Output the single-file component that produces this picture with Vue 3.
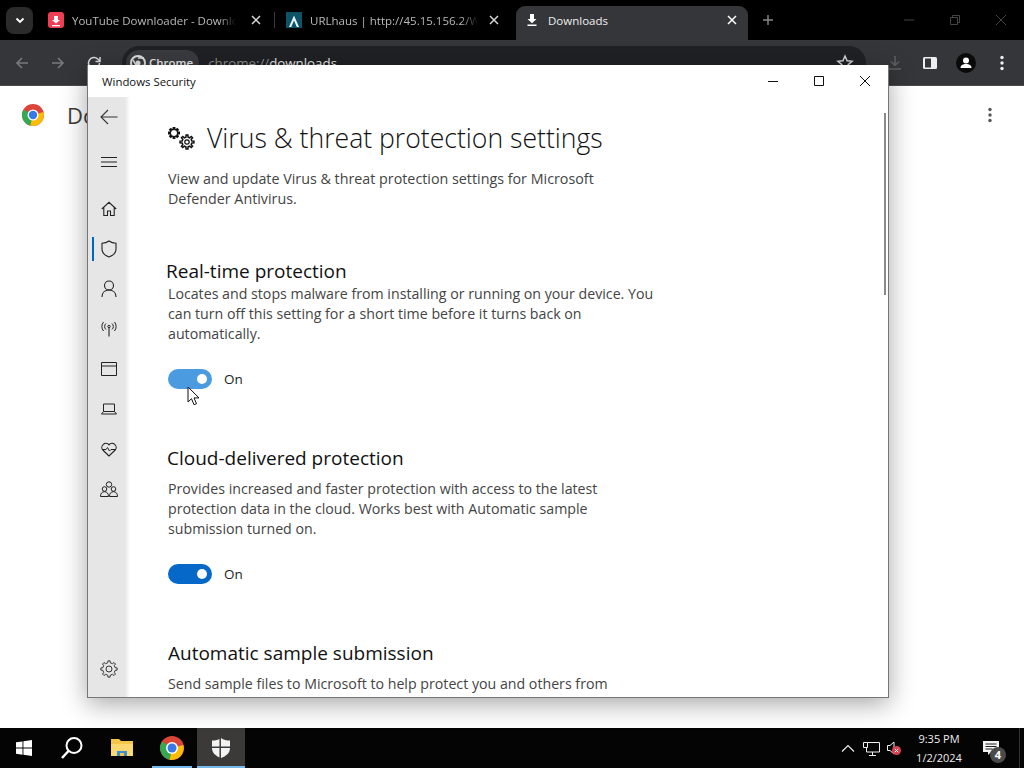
<template>
  <div class="screen">
    <!-- chrome tab strip -->
    <div class="tabstrip">
      <div class="tab-search">
        <svg width="12" height="12" viewBox="0 0 12 12"><path d="M2.500 4.500 6 8l3.500-3.500" fill="none" stroke="#fff" stroke-width="1.800" /></svg>
      </div>
      <div class="tab tab1">
        <span class="favicon fav-yt">
          <svg width="16" height="16" viewBox="0 0 16 16"><path d="M6 3h4v4h2L8 10.500 4 7h2zM4 12h8v1.200H4z" fill="#fff" /></svg>
        </span>
        <span class="tab-title">YouTube Downloader - Downlo</span>
        <svg class="tab-x" width="10" height="10" viewBox="0 0 10 10"><path d="M1 1l8 8M9 1 1 9" stroke="#d8d8d8" stroke-width="1.500" /></svg>
      </div>
      <div class="tab-sep"></div>
      <div class="tab tab2">
        <span class="favicon fav-url">
          <svg width="16" height="16" viewBox="0 0 16 16"><path d="M8 2.500 3 14h2.200L8 7.500l2.800 6.500H13z" fill="#e8f6fa" /></svg>
        </span>
        <span class="tab-title">URLhaus | http://45.15.156.2/W</span>
        <svg class="tab-x" width="10" height="10" viewBox="0 0 10 10"><path d="M1 1l8 8M9 1 1 9" stroke="#d8d8d8" stroke-width="1.500" /></svg>
      </div>
      <div class="tab tab-active">
        <svg class="dl-icon" width="16" height="16" viewBox="0 0 16 16"><path d="M6 2h4v5h2.500L8 11.200 3.500 7H6zM3.500 12.500h9V14h-9z" fill="#fff" /></svg>
        <span class="active-title">Downloads</span>
        <svg class="tab-x" width="10" height="10" viewBox="0 0 10 10"><path d="M1 1l8 8M9 1 1 9" stroke="#fff" stroke-width="1.500" /></svg>
      </div>
      <svg class="tab-plus" width="12" height="12" viewBox="0 0 12 12"><path d="M6 1v10M1 6h10" stroke="#8a8a8a" stroke-width="1.400" /></svg>
      <div class="win-ctrls">
        <svg width="12" height="12" viewBox="0 0 12 12"><path d="M1 6h10" stroke="#444" /></svg>
        <svg width="12" height="12" viewBox="0 0 12 12"><path d="M1.500 3.500h7v7h-7zM3.500 3.500v-2h7v7h-2" fill="none" stroke="#444" /></svg>
        <svg width="12" height="12" viewBox="0 0 12 12"><path d="M1 1l10 10M11 1 1 11" stroke="#444" /></svg>
      </div>
    </div>

    <!-- chrome toolbar -->
    <div class="toolbar">
      <svg width="16" height="16" viewBox="0 0 16 16"><path d="M14 8H3M8 3 3 8l5 5" fill="none" stroke="#77797c" stroke-width="1.600" /></svg>
      <svg width="16" height="16" viewBox="0 0 16 16"><path d="M2 8h11M8 3l5 5-5 5" fill="none" stroke="#77797c" stroke-width="1.600" /></svg>
      <svg width="16" height="16" viewBox="0 0 16 16"><path d="M13.500 8A5.500 5.500 0 1 1 11.800 4L14 6M14 2v4.500H9.500" fill="none" stroke="#dcdcdc" stroke-width="1.500" /></svg>
      <div class="omnibox">
        <div class="chip">
          <svg width="16" height="16" viewBox="0 0 16 16"><circle cx="8" cy="8" r="7" fill="none" stroke="#ddd" stroke-width="2" /><circle cx="8" cy="8" r="2.500" fill="#ddd" /><path d="M8 3h6M3 5l3 5M13 10l-4 4" stroke="#ddd" stroke-width="1.500" /></svg>
          <span class="chip-text">Chrome</span>
        </div>
        <span class="url"><span class="url-dim">chrome://</span>downloads</span>
        <svg class="star" width="18" height="18" viewBox="0 0 18 18"><path d="m9 2 2.100 4.700 5 .5-3.800 3.300 1.100 5L9 13l-4.400 2.500 1.100-5L1.900 7.200l5-.5z" fill="none" stroke="#d5d5d5" stroke-width="1.500" /></svg>
      </div>
      <div class="tool-right">
        <svg width="18" height="18" viewBox="0 0 18 18"><path d="M9 2v9M5 7.500l4 4 4-4M3 15h12" fill="none" stroke="#5e6064" stroke-width="1.500" /></svg>
        <svg width="16" height="16" viewBox="0 0 16 16"><rect x="1" y="2" width="14" height="12" rx="1.500" fill="#eee" /><rect x="3" y="3.500" width="6" height="9" fill="#35363a" /></svg>
        <svg width="20" height="20" viewBox="0 0 20 20"><circle cx="10" cy="10" r="10" fill="#0a0a0a" /><circle cx="10" cy="7.500" r="3" fill="#fff" /><path d="M4.500 15c0-3 2.500-4 5.500-4s5.500 1 5.500 4z" fill="#fff" /></svg>
        <svg class="tool-dots" width="4" height="16" viewBox="0 0 4 16"><circle cx="2" cy="2.500" r="1.700" fill="#eee" /><circle cx="2" cy="8" r="1.700" fill="#eee" /><circle cx="2" cy="13.500" r="1.700" fill="#eee" /></svg>
      </div>
    </div>

    <!-- downloads page behind the window -->
    <div class="page">
      <svg width="24" height="24" viewBox="0 0 24 24">
        <circle cx="12" cy="12" r="11" fill="#db4437" />
        <path d="M12 12 22.500 9A11 11 0 0 1 9 22.600z" fill="#fbbc04" />
        <path d="M12 12 9 22.600A11 11 0 0 1 2.500 6.500z" fill="#34a853" />
        <circle cx="12" cy="12" r="5.500" fill="#fff" />
        <circle cx="12" cy="12" r="4.200" fill="#3b78e7" />
      </svg>
      <span class="page-title">Downloads</span>
      <svg class="page-dots" width="4" height="16" viewBox="0 0 4 16"><circle cx="2" cy="2.500" r="1.700" fill="#555" /><circle cx="2" cy="8" r="1.700" fill="#555" /><circle cx="2" cy="13.500" r="1.700" fill="#555" /></svg>
    </div>

    <!-- taskbar -->
    <div class="taskbar">
      <div class="task-btn start">
        <svg width="16" height="16" viewBox="0 0 16 16"><path d="M0 2.300 6.500 1.400v6.200H0zM7.400 1.300 16 0v7.600H7.400zM0 8.500h6.500v6.200L0 13.800zM7.400 8.500H16V16l-8.600-1.200z" fill="#fff" /></svg>
      </div>
      <div class="task-btn">
        <svg width="24" height="24" viewBox="0 0 24 24"><circle cx="14" cy="9.500" r="7.500" fill="none" stroke="#fff" stroke-width="2" /><path d="M8.500 15 2 22" stroke="#fff" stroke-width="2.500" /></svg>
      </div>
      <div class="task-btn">
        <svg width="22" height="20" viewBox="0 0 22 20"><path d="M0 1h8l2 2h12v15H0z" fill="#f6c648" /><path d="M0 6h22v12H0z" fill="#fbd970" /><path d="M6 13h10v5H6z" fill="#3c8fd6" /><path d="M9 15h4v3H9z" fill="#f6c648" /></svg>
      </div>
      <div class="task-btn running chrome-btn">
        <svg width="24" height="24" viewBox="0 0 24 24">
          <circle cx="12" cy="12" r="12" fill="#db4437" />
          <path d="M12 12 23.400 9A12 12 0 0 1 9.500 23.700z" fill="#fbbc04" />
          <path d="M12 12 9.500 23.700A12 12 0 0 1 2 5.500z" fill="#34a853" />
          <circle cx="12" cy="12" r="6" fill="#fff" />
          <circle cx="12" cy="12" r="4.500" fill="#3b78e7" />
        </svg>
      </div>
      <div class="task-btn running active">
        <svg width="18" height="20" viewBox="0 0 18 20"><path d="M9 0c2.500 1.800 5.500 2.600 9 2.600V10c0 5-4 8.200-9 10-5-1.800-9-5-9-10V2.600C3.500 2.600 6.500 1.800 9 0z" fill="#f2f2f2" /><path d="M8.200 0v20M0 9.300h18" stroke="#3a3a3a" stroke-width="1.500" /></svg>
      </div>
      <div class="tray">
        <svg width="14" height="8" viewBox="0 0 14 8"><path d="M1 7.500 7 1.500l6 6" fill="none" stroke="#eee" stroke-width="1.200" /></svg>
        <svg class="tray-net" width="17" height="15" viewBox="0 0 17 15"><path d="M.5 1.500h4v5h-4zM4.500 1.500h12v9.500H3.500V6.500M9.500 11v3M6 14.500h7" fill="none" stroke="#eee" /></svg>
        <span class="tray-vol">
          <svg width="14" height="14" viewBox="0 0 14 14"><path d="M.5 4.500h2.500l4-3.500v12l-4-3.500H.5z" fill="none" stroke="#eee" /></svg>
          <svg class="mute" width="9" height="9" viewBox="0 0 9 9"><circle cx="4.500" cy="4.500" r="4.500" fill="#d9404f" /><path d="M2.800 2.800l3.400 3.400M6.200 2.800 2.800 6.200" stroke="#fff" /></svg>
        </span>
        <div class="clock">
          <div>9:35 PM</div>
          <div>1/2/2024</div>
        </div>
        <span class="notif">
          <svg width="16" height="15" viewBox="0 0 16 15"><path d="M0 0h16v11H8l-3 3v-3H0z" fill="#f2f2f2" /><path d="M2.500 3h11M2.500 5.500h11M2.500 8h7" stroke="#222" /></svg>
          <span class="notif-count">4</span>
        </span>
      </div>
      <div class="desk-peek"></div>
    </div>

    <!-- Windows Security window -->
    <div class="window">
      <div class="titlebar">
        <span class="app-name">Windows Security</span>
        <div class="title-ctrls">
          <svg width="12" height="12" viewBox="0 0 12 12"><path d="M1 6.500h10" stroke="#111" /></svg>
          <svg width="12" height="12" viewBox="0 0 12 12"><path d="M1.500 1.500h9v9h-9z" fill="none" stroke="#111" /></svg>
          <svg width="12" height="12" viewBox="0 0 12 12"><path d="M1 1l10 10M11 1 1 11" stroke="#111" /></svg>
        </div>
      </div>
      <div class="win-body">
        <nav class="sidebar">
          <div class="nav-item nav-back">
            <svg width="18" height="16" viewBox="0 0 18 16"><path d="M17.500 8H1M8 1 1 8l7 7" fill="none" stroke="#333" stroke-width="1.100" /></svg>
          </div>
          <div class="nav-item nav-menu">
            <svg width="16" height="12" viewBox="0 0 16 12"><path d="M0 1.500h16M0 6h16M0 10.500h16" stroke="#222" /></svg>
          </div>
          <div class="nav-item nav-home">
            <svg width="16" height="16" viewBox="0 0 16 16"><path d="M.8 8 8 1.300 15.200 8M2.800 6.300v8.200h3.700v-4.500h3v4.500h3.700V6.300" fill="none" stroke="#222" stroke-width="1.100" /></svg>
          </div>
          <div class="nav-item nav-active">
            <span class="active-bar"></span>
            <svg width="16" height="18" viewBox="0 0 16 18"><path d="M8 1c2 1.500 4.500 2.200 7 2.200V9c0 4-3 6.500-7 8-4-1.500-7-4-7-8V3.200C3.500 3.200 6 2.500 8 1z" fill="none" stroke="#222" stroke-width="1.100" /></svg>
          </div>
          <div class="nav-item">
            <svg width="16" height="18" viewBox="0 0 16 18"><circle cx="8" cy="5.500" r="4.500" fill="none" stroke="#222" stroke-width="1.100" /><path d="M1 17c0-4.500 3-7 7-7s7 2.500 7 7" fill="none" stroke="#222" stroke-width="1.100" /></svg>
          </div>
          <div class="nav-item">
            <svg width="16" height="16" viewBox="0 0 16 16"><path d="M8 7v8.500" stroke="#222" stroke-width="1.100" /><circle cx="8" cy="5.500" r="1.200" fill="none" stroke="#222" /><path d="M5 2.500a4 4 0 0 0 0 6M11 2.500a4 4 0 0 1 0 6M2.500 1a7 7 0 0 0 0 9M13.500 1a7 7 0 0 1 0 9" fill="none" stroke="#222" /></svg>
          </div>
          <div class="nav-item">
            <svg width="16" height="14" viewBox="0 0 16 14"><path d="M.5.500h15v13H.5zM.5 4h15" fill="none" stroke="#222" /></svg>
          </div>
          <div class="nav-item">
            <svg width="16" height="12" viewBox="0 0 16 12"><path d="M2.500 1h11v7.500h-11zM2.500 8.500 .5 11h15l-2-2.500" fill="none" stroke="#222" /></svg>
          </div>
          <div class="nav-item">
            <svg width="16" height="15" viewBox="0 0 16 15"><path d="M8 14 1.800 8A4 4 0 0 1 8 2.800 4 4 0 0 1 14.200 8z" fill="none" stroke="#222" stroke-width="1.100" /><path d="M1 7.500h4l1.500-2 2 3.500 1.500-1.500h5" fill="none" stroke="#222" /></svg>
          </div>
          <div class="nav-item">
            <svg width="18" height="16" viewBox="0 0 18 16"><circle cx="9" cy="3.500" r="2.700" fill="none" stroke="#222" /><circle cx="4.500" cy="8" r="2.300" fill="none" stroke="#222" /><circle cx="13.500" cy="8" r="2.300" fill="none" stroke="#222" /><path d="M.5 15.500c0-3 1.500-4.800 4-4.800s4 1.800 4 4.800zM9.500 15.500c0-3 1.500-4.800 4-4.800s4 1.800 4 4.800z" fill="none" stroke="#222" /></svg>
          </div>
          <div class="nav-item nav-gear">
            <svg width="18" height="18" viewBox="0 0 18 18">
              <path :d="gear(9, 9, 6.300, 8.200, 8)" fill="none" stroke="#333" />
              <circle cx="9" cy="9" r="3" fill="none" stroke="#333" />
            </svg>
          </div>
        </nav>
        <main class="content">
          <div class="heading">
            <svg width="28" height="24" viewBox="0 0 28 24">
              <path :d="gear(6, 7, 3.700, 5.300, 8)" fill="none" stroke="#111" stroke-width="1.500" />
              <path :d="gear(19, 16, 5, 7, 8)" fill="none" stroke="#111" stroke-width="1.500" />
              <circle cx="19" cy="16" r="2.200" fill="none" stroke="#111" stroke-width="1.200" />
            </svg>
            <h1>Virus &amp; threat protection settings</h1>
          </div>
          <p class="lead">View and update Virus &amp; threat protection settings for Microsoft<br />Defender Antivirus.</p>
          <section v-for="s in sections" :key="s.title" class="setting" :class="s.cls">
            <h2>{{ s.title }}</h2>
            <p class="desc"><template v-for="(l, i) in s.lines" :key="i">{{ l }}<br /></template></p>
            <div v-if="s.toggle" class="toggle-row">
              <span class="toggle" :class="{ hover: s.hover }"><span class="knob"></span></span>
              <span class="toggle-label">On</span>
            </div>
          </section>
        </main>
        <div class="scrollthumb"></div>
      </div>
    </div>

    <!-- mouse pointer -->
    <svg class="cursor" width="14" height="20" viewBox="0 0 14 20"><path d="M1 1v15l3.500-3.300 2.500 6 2.500-1-2.500-5.800h5z" fill="#fff" stroke="#111" /></svg>
  </div>
</template>

<script setup>
const sections = [
  {
    title: 'Real-time protection',
    cls: 'first',
    hover: true,
    toggle: true,
    lines: [
      'Locates and stops malware from installing or running on your device. You',
      'can turn off this setting for a short time before it turns back on',
      'automatically.'
    ]
  },
  {
    title: 'Cloud-delivered protection',
    toggle: true,
    lines: [
      'Provides increased and faster protection with access to the latest',
      'protection data in the cloud. Works best with Automatic sample',
      'submission turned on.'
    ]
  },
  {
    title: 'Automatic sample submission',
    cls: 'last',
    toggle: false,
    lines: ['Send sample files to Microsoft to help protect you and others from']
  }
]

// outline of a cog wheel, n teeth between radius r1 and r2
function gear(cx, cy, r1, r2, n) {
  const w = (Math.PI / n) * 0.55
  const pts = []
  for (let i = 0; i < n; i++) {
    const a = (i * 2 * Math.PI) / n
    pts.push([a - w, r1], [a - w * 0.6, r2], [a + w * 0.6, r2], [a + w, r1])
  }
  const d = pts.map(([a, r]) => `${(cx + r * Math.cos(a)).toFixed(2)} ${(cy + r * Math.sin(a)).toFixed(2)}`)
  return 'M' + d.join('L') + 'Z'
}
</script>

<style>
html, body {
  background: #000;
}
</style>

<style scoped>
.screen {
  width: 1024px;
  height: 768px;
  position: relative;
  overflow: hidden;
  display: flex;
  flex-direction: column;
  background: #fff;
  font-family: "Open Sans", "Noto Sans", sans-serif;
}

/* Chrome */
.tabstrip {
  height: 40px;
  background: #000;
  display: flex;
  align-items: center;
  position: relative;
  flex: none;
}
.tab-search {
  width: 27px;
  height: 27px;
  margin-left: 6px;
  border-radius: 8px;
  background: #2b2b2b;
  display: flex;
  align-items: center;
  justify-content: center;
}
.tab {
  display: flex;
  align-items: center;
  height: 34px;
}
.tab1 {
  width: 226px;
  margin-left: 15px;
}
.tab2 {
  width: 214px;
  margin-left: 11px;
}
.favicon {
  width: 16px;
  height: 16px;
  flex: none;
  border-radius: 3px;
  display: block;
}
.fav-yt {
  background: #ee3f56;
}
.fav-url {
  background: #0e5266;
  border-radius: 0;
}
.tab-title {
  margin-left: 8px;
  white-space: nowrap;
  font-size: 11.500px;
  color: #b9b9b9;
  -webkit-mask-image: linear-gradient(to right, #000 90%, transparent);
  mask-image: linear-gradient(to right, #000 90%, transparent);
}
.tab1 .tab-title {
  width: 164px;
}
.tab2 .tab-title {
  width: 168px;
}
.tab-x {
  margin-left: 15px;
  flex: none;
}
.tab2 .tab-x {
  margin-left: 11px;
}
.tab-sep {
  width: 1px;
  height: 16px;
  background: #3a3a3a;
}
.tab-active {
  width: 232px;
  margin-left: 16px;
  margin-top: 6px;
  padding: 0 0 6px 8px;
  background: #35363a;
  border-radius: 9px 9px 0 0;
  box-sizing: border-box;
}
.dl-icon {
  flex: none;
}
.active-title {
  margin-left: 8px;
  font-size: 11.500px;
  color: #eee;
  width: 179px;
}
.tab-active .tab-x {
  margin-left: 0;
}
.tab-plus {
  margin-left: 14px;
}
.win-ctrls {
  margin-left: auto;
  margin-right: 17px;
  display: flex;
  gap: 34px;
}
.toolbar {
  height: 46px;
  flex: none;
  background: #35363a;
  display: flex;
  align-items: center;
  padding: 0 20px 0 14px;
  box-sizing: border-box;
  gap: 20px;
  border-bottom: 1px solid #4a4a4a;
}
.tool-right {
  display: flex;
  align-items: center;
  gap: 18px;
}
.tool-dots {
  margin-left: 6px;
}
.omnibox {
  width: 744px;
  height: 34px;
  flex: none;
  border-radius: 17px;
  background: #202124;
  display: flex;
  align-items: center;
  padding: 0 12px 0 4px;
  box-sizing: border-box;
}
.chip {
  display: flex;
  align-items: center;
  gap: 3px;
  background: #3a3b3f;
  border-radius: 13px;
  height: 26px;
  padding: 0 6px 0 4px;
}
.chip-text {
  font-size: 11.500px;
  font-weight: 600;
  color: #e8e8e8;
}
.url {
  margin-left: 9px;
  font-size: 13.300px;
  color: #e8e8e8;
}
.url-dim {
  color: #8e8e8e;
}
.star {
  margin-left: auto;
}
.page {
  flex: 1;
  position: relative;
  display: flex;
  align-items: flex-start;
  padding: 17px 0 0 21px;
  min-height: 0;
}
.page-title {
  margin-left: 22px;
  font-size: 22px;
  color: #3c3c3c;
  line-height: 24px;
}
.page-dots {
  margin-left: auto;
  margin-right: 32px;
  margin-top: 4px;
}

/* Taskbar */
.taskbar {
  height: 40px;
  flex: none;
  background: #040404;
  display: flex;
  align-items: stretch;
  position: relative;
}
.task-btn {
  width: 48px;
  margin-right: 2px;
  box-sizing: border-box;
  display: flex;
  align-items: center;
  justify-content: center;
  position: relative;
}
.start {
  margin-right: 0;
}
.chrome-btn {
  margin-right: 1px;
}
.running::after {
  content: "";
  position: absolute;
  left: 4px;
  right: 4px;
  bottom: 0;
  height: 2px;
  background: #76b9ed;
}
.active {
  background: #3b3a39;
}
.active::after {
  left: 0;
  right: 0;
}
.tray {
  margin-left: auto;
  display: flex;
  align-items: center;
  color: #eee;
}
.tray-net {
  margin-left: 8px;
}
.tray-vol {
  margin-left: 7px;
  position: relative;
  display: flex;
}
.mute {
  position: absolute;
  left: 5px;
  top: 5px;
}
.clock {
  margin-left: 7px;
  width: 62px;
  text-align: center;
  font-size: 11px;
  line-height: 19px;
}
.notif {
  margin-left: 13px;
  position: relative;
  display: flex;
  margin-right: 20px;
}
.notif-count {
  position: absolute;
  left: 7px;
  top: 6px;
  width: 16px;
  height: 16px;
  border-radius: 50%;
  background: #4a4a4a;
  color: #fff;
  font-size: 11px;
  font-weight: 700;
  line-height: 16px;
  text-align: center;
}
.desk-peek {
  width: 1px;
  margin-right: 4px;
  background: #333;
}

/* Windows Security window */
.window {
  position: absolute;
  left: 87px;
  top: 65px;
  width: 802px;
  height: 633px;
  box-sizing: border-box;
  background: #fff;
  border: 1px solid #767676;
  border-top: none;
  box-shadow: 0 6px 24px rgba(0, 0, 0, 0.35);
  display: flex;
  flex-direction: column;
  overflow: hidden;
  color: #111;
}
.titlebar {
  height: 32px;
  flex: none;
  display: flex;
  align-items: center;
  padding-left: 14px;
}
.app-name {
  font-size: 11.400px;
  color: #111;
}
.title-ctrls {
  margin-left: auto;
  margin-right: 17px;
  display: flex;
  gap: 34px;
}
.win-body {
  flex: 1;
  min-height: 0;
  display: flex;
  position: relative;
}
.sidebar {
  width: 42px;
  flex: none;
  background: linear-gradient(to right, #e6e6e6 88%, #fff);
  display: flex;
  flex-direction: column;
  align-items: stretch;
}
.nav-item {
  height: 40px;
  width: 41px;
  flex: none;
  display: flex;
  align-items: center;
  justify-content: center;
  position: relative;
}
.nav-menu {
  margin-top: 5px;
}
.nav-home {
  margin-top: 7px;
}
.nav-gear {
  margin-top: auto;
  margin-bottom: 8px;
}
.active-bar {
  position: absolute;
  left: 4px;
  top: 8px;
  width: 2px;
  height: 24px;
  background: #0067c0;
}
.content {
  flex: 1;
  min-width: 0;
  padding: 20px 0 0 38px;
}
.heading {
  display: flex;
  align-items: center;
  gap: 11px;
  height: 42px;
}
h1 {
  margin: 0;
  font-size: 26.600px;
  font-weight: 300;
  color: #111;
  white-space: nowrap;
}
.lead,
.desc {
  margin: 0;
  font-size: 14.200px;
  line-height: 20px;
  color: #444;
  white-space: nowrap;
}
.lead {
  margin-top: 10px;
  font-size: 14.300px;
}
.setting {
  margin-top: 56px;
}
.setting.first {
  margin-top: 49px;
}
h2 {
  margin: 0 0 0 -1px;
  font-size: 19px;
  font-weight: 400;
  line-height: 26px;
  color: #111;
  white-space: nowrap;
}
.first h2 {
  margin-left: -2px;
}
.last h2 {
  margin-left: 0;
}
.desc {
  margin-top: 8px;
}
.first .desc {
  margin-top: 0;
}
.toggle-row {
  display: flex;
  align-items: center;
  gap: 12px;
  margin-top: 25px;
  height: 20px;
}
.toggle {
  width: 44px;
  height: 20px;
  border-radius: 10px;
  background: #0668c8;
  display: flex;
  align-items: center;
  justify-content: flex-end;
  padding-right: 5px;
  box-sizing: border-box;
}
.toggle.hover {
  background: #4a9be0;
}
.knob {
  width: 10px;
  height: 10px;
  border-radius: 50%;
  background: #fff;
}
.toggle-label {
  font-size: 13.500px;
  color: #222;
}
.scrollthumb {
  position: absolute;
  right: 2px;
  top: 16px;
  width: 2px;
  height: 182px;
  background: #8a8a8a;
}
.cursor {
  position: absolute;
  left: 187px;
  top: 386px;
}
</style>
